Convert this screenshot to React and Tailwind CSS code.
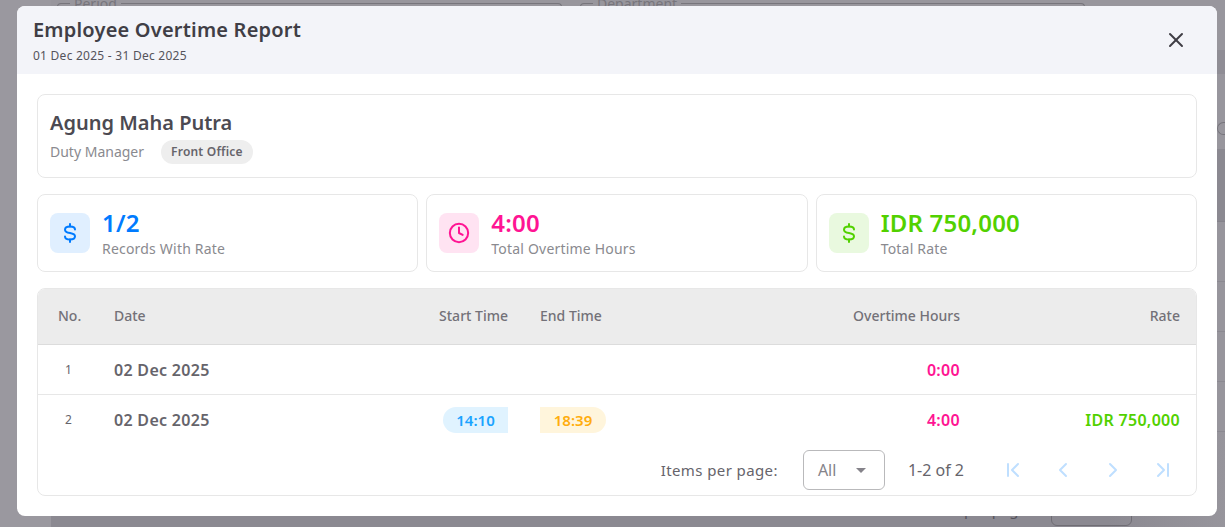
import { X, Clock, ChevronLeft, ChevronRight, ChevronFirst, ChevronLast } from 'lucide-react';

// S with short stubs, lucide's dollar has a full bar through it
function DollarIcon({ className }) {
  return (
    <svg width="24" height="24" viewBox="0 0 24 24" fill="none" stroke="currentColor" strokeWidth="2" strokeLinecap="round" className={className}>
      <path d="M12 3v2.5M12 18.5V21" />
      <path d="M17 8.5C17 6.6 14.8 5.5 12 5.5S7 6.6 7 8.7c0 2 2.1 2.8 5 3.3s5 1.300 5 3.300c0 2.100-2.200 3.200-5 3.200s-5-1.100-5-3" />
    </svg>
  );
}

function ClockIcon({ className }) {
  return <Clock size={22} strokeWidth={2.2} className={className} />;
}

const stats = [
  { value: '1/2', label: 'Records With Rate', icon: DollarIcon, tone: 'text-[#007bff]', box: 'bg-[#e0efff]' },
  { value: '4:00', label: 'Total Overtime Hours', icon: ClockIcon, tone: 'text-[#ff1493]', box: 'bg-[#ffe3f2]' },
  { value: 'IDR 750,000', label: 'Total Rate', icon: DollarIcon, tone: 'text-[#52d100]', box: 'bg-[#e9f9df]' },
];

function StatCard({ stat }) {
  const Icon = stat.icon;
  return (
    <div className="flex h-[78px] flex-1 items-center gap-3 rounded-lg border border-[#e7e7e7] px-3">
      <div className={`flex h-10 w-10 items-center justify-center rounded-lg ${stat.box}`}>
        <Icon className={stat.tone} />
      </div>
      <div>
        <div className={`mt-px text-2xl leading-7 font-semibold tracking-[0.2px] ${stat.tone}`}>{stat.value}</div>
        <div className="mt-[2px] text-sm leading-5 tracking-[0.2px] text-[#8a8a8f]">{stat.label}</div>
      </div>
    </div>
  );
}

// dimmed page that sits behind the dialog
function Backdrop() {
  return (
    <div className="flex h-full bg-[#8b8991]">
      <div className="w-[51px] bg-[#9a989f]" />
      <div className="flex flex-1 flex-col">
        <div className="flex h-[50px] gap-[18px] bg-[#98969d] pl-[6px] text-sm text-[#77757c]">
          <div className="mt-[3px] flex h-[20px] w-[505px] rounded-t border-x border-t border-[#77757c]">
            <span className="-mt-[10px] ml-3 h-5 bg-[#98969d] px-1 leading-5">Period</span>
          </div>
          <div className="mt-[3px] flex h-[20px] w-[505px] rounded-t border-x border-t border-[#77757c]">
            <span className="-mt-[10px] ml-3 h-5 bg-[#98969d] px-1 leading-5">Department</span>
          </div>
        </div>
        <div className="h-[24px] bg-[#8f8d95]" />
        <div className="flex h-[75px] items-end justify-end bg-[#98969d] pb-[14px]">
          <span className="h-[13px] w-[8px] rounded-l-full border border-r-0 border-[#77757c]" />
        </div>
        <div className="h-[73px] border-b border-[#85838b] bg-[#8b8991]" />
        <div className="h-[60px] border-b border-[#8b8991] bg-[#97959c]" />
        <div className="h-[50px] border-b border-[#8b8991] bg-[#97959c]" />
        <div className="h-[50px] border-b border-[#8b8991] bg-[#97959c]" />
        <div className="h-[50px] border-b border-[#8b8991] bg-[#97959c]" />
        <div className="flex flex-1 items-end justify-end bg-[linear-gradient(90deg,#8b8991_90%,#97959c)] pr-[93px] text-[#55535b]">
          <span className="mb-[8px] text-[15px] leading-5">per page</span>
          <div className="mb-[1px] ml-[24px] h-[20px] w-[81px] rounded-md border border-[#6f6d74]" />
        </div>
      </div>
    </div>
  );
}

export default function App() {
  return (
    <div className="relative h-[527px] w-[1225px] overflow-hidden font-['Noto_Sans',sans-serif]">
      <Backdrop />
      <div className="absolute top-[6px] left-[17px] flex h-[510px] w-[1200px] flex-col overflow-hidden rounded-lg bg-white">
        <div className="flex h-[68px] items-center justify-between bg-[#f3f4f9] pr-[29px] pl-4">
          <div>
            <div className="text-xl leading-7 font-semibold tracking-[0.2px] text-[#403e46]">Employee Overtime Report</div>
            <div className="mt-1 text-xs leading-4 tracking-[0.25px] text-[#55535b]">01 Dec 2025 - 31 Dec 2025</div>
          </div>
          <X size={24} strokeWidth={2} className="text-[#3f3d45]" />
        </div>
        <div className="flex flex-1 flex-col gap-4 p-5">
          <div className="flex h-[84px] flex-col justify-center rounded-lg border border-[#e7e7e7] px-3">
            <div className="pt-px text-xl leading-7 font-semibold text-[#4c4a52]">Agung Maha Putra</div>
            <div className="mt-[3px] flex items-center">
              <span className="text-sm text-[#8a8a8f]">Duty Manager</span>
              <span className="ml-[17px] rounded-full bg-[#eeeeee] px-[10px] py-1 text-xs font-semibold tracking-[0.2px] text-[#66646b]">Front Office</span>
            </div>
          </div>
          <div className="flex gap-2">
            {stats.map((s) => <StatCard key={s.label} stat={s} />)}
          </div>
          <div className="flex-1 overflow-hidden rounded-lg border border-[#e7e7e7]">
            <div className="flex h-[56px] items-center border-b border-[#dcdcdc] bg-[#ececec] pb-[2px] text-sm font-medium text-[#737178]">
              <div className="w-[60px] pl-5">No.</div>
              <div className="w-[320px] pl-4">Date</div>
              <div className="w-[102px] pr-[12px] text-right">Start Time</div>
              <div className="w-[100px] pl-5">End Time</div>
              <div className="w-[340px] text-right">Overtime Hours</div>
              <div className="flex-1 pr-4 text-right">Rate</div>
            </div>
            <div className="flex h-[50px] items-center border-b border-[#e7e7e7] text-[#66646b]">
              <div className="w-[60px] pl-[27px] text-xs">1</div>
              <div className="w-[320px] pl-4 text-base font-semibold tracking-[0.3px]">02 Dec 2025</div>
              <div className="w-[102px]" />
              <div className="w-[100px]" />
              <div className="w-[340px] text-right text-base font-semibold tracking-[0.3px] text-[#ff1493]">0:00</div>
              <div className="flex-1" />
            </div>
            <div className="flex h-[50px] items-center text-[#66646b]">
              <div className="w-[60px] pl-[27px] text-xs">2</div>
              <div className="w-[320px] pl-4 text-base font-semibold tracking-[0.3px]">02 Dec 2025</div>
              <div className="w-[102px] pl-[25px]">
                <div className="flex h-[26px] w-[65px] items-center justify-center rounded-l-full bg-[#e0f3ff] text-[15px] font-semibold text-[#1aa3ff]">14:10</div>
              </div>
              <div className="w-[100px] pl-5">
                <div className="flex h-[26px] w-[66px] items-center justify-center rounded-r-full bg-[#fff5dc] text-[15px] font-semibold text-[#ffad0d]">18:39</div>
              </div>
              <div className="w-[340px] text-right text-base font-semibold tracking-[0.3px] text-[#ff1493]">4:00</div>
              <div className="flex-1 pr-4 text-right text-base font-semibold tracking-[0.3px] text-[#52d100]">IDR 750,000</div>
            </div>
            <div className="flex h-[50px] items-center justify-end text-[15px] text-[#66646b]">
              <span className="tracking-[0.4px]">Items per page:</span>
              <div className="ml-[25px] flex h-10 w-[82px] items-center justify-between rounded-md border border-[#b9b9bb] pr-[18px] pl-[14px] text-base text-[#85838a]">
                <span>All</span>
                <span className="h-0 w-0 border-x-[5px] border-t-[5px] border-x-transparent border-t-[#85838a]" />
              </div>
              <span className="ml-[23px] text-base">1-2 of 2</span>
              <div className="mr-[21px] ml-[37px] flex gap-[26px] text-[#bfdfff]">
                <ChevronFirst size={24} strokeWidth={2} />
                <ChevronLeft size={24} strokeWidth={2} />
                <ChevronRight size={24} strokeWidth={2} />
                <ChevronLast size={24} strokeWidth={2} />
              </div>
            </div>
          </div>
        </div>
      </div>
    </div>
  );
}
